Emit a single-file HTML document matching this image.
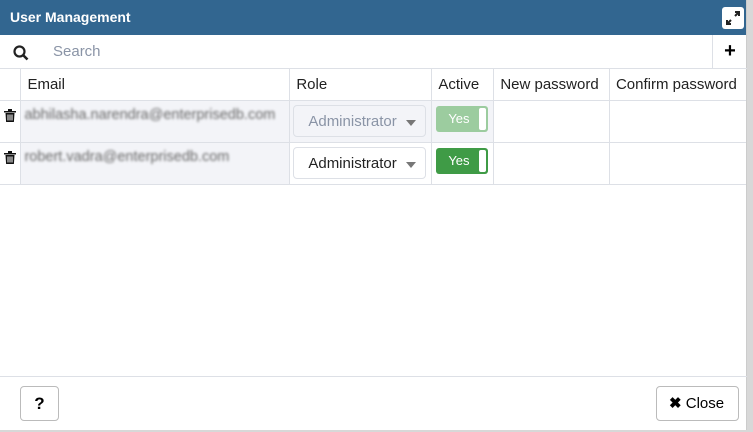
<!DOCTYPE html>
<html><head><style>
*{box-sizing:border-box;margin:0;padding:0}
body{width:753px;height:432px;background:#d8d8d8;font-family:"Liberation Sans",sans-serif;position:relative;overflow:hidden}
.dlg{position:absolute;left:0;top:0;width:747px;height:430px;background:#fff;border-right:1px solid #ccc}
.title{height:35px;background:#326690;color:#fff;font-weight:bold;font-size:14px;line-height:35px;padding-left:10px}
.exp{position:absolute;left:722px;top:7px;width:22px;height:22px;background:#fff;border-radius:3px}
.search{position:absolute;top:35px;left:0;width:747px;height:34px;border-bottom:1px solid #dde0e6}
.search .ph{position:absolute;left:53px;top:8px;color:#8a94a6;font-size:15px}
.plusbox{position:absolute;left:712px;top:0;width:35px;height:34px;border-left:1px solid #dde0e6;font-size:20px;font-weight:bold;text-align:center;line-height:33px}
table{position:absolute;top:68px;left:0;border-collapse:collapse;font-size:15px}
td,th{border:1px solid #dde0e6;text-align:left;font-weight:normal;color:#222}
th{height:32px;padding-left:6px}
tr.r td{height:42px;vertical-align:top}
.gray td.bg{background:#f3f4f8}
.em{filter:blur(1.2px);color:#666;font-size:14.5px;padding:6px 0 0 3px;white-space:nowrap}
.sel{margin:4px 3px;width:133px;height:32px;border:1px solid #dde0e6;border-radius:4px;padding:7px 0 0 14px;position:relative;font-size:15px}
.sel:after{content:"";position:absolute;right:9px;top:14px;border:5px solid transparent;border-top:6px solid #777}
.tg{margin:5px 4px;width:52px;height:26px;border-radius:3px;background:#3f9b46;color:#fff;font-size:13px;position:relative;padding:5px 0 0 12px}
.tg:after{content:"";position:absolute;right:2px;top:2px;width:7px;height:22px;background:#fff;border-radius:2px}
.btn{position:absolute;top:386px;height:35px;border:1px solid #bbb;border-radius:4px;background:#fff;font-size:15px}
</style></head><body>
<div class="dlg">
<div class="title">User Management</div>
<div class="exp"><svg width="22" height="22"><path d="M13 5h4v4M17 5l-4 4M9 17H5v-4M5 17l4-4" stroke="#222" stroke-width="2" fill="none"/></svg></div>
<div class="search">
<svg style="position:absolute;left:13px;top:10px" width="16" height="16"><circle cx="6.5" cy="6.5" r="5" stroke="#222" stroke-width="2.2" fill="none"/><path d="M10 10l4.5 4.5" stroke="#222" stroke-width="2.6"/></svg>
<span class="ph">Search</span>
<div class="plusbox">+</div>
</div>
<table>
<tr><th style="width:21px;border-left:0"></th><th style="width:269px">Email</th><th style="width:142px">Role</th><th style="width:62px">Active</th><th style="width:116px">New password</th><th style="width:137px;border-right:0">Confirm password</th></tr>
<tr class="r gray"><td style="border-left:0;padding:8px 0 0 4px"><svg width="12" height="13"><path d="M0 2h12v1.5H0zM4 0h4v2H4zM1.5 4h9l-.6 9H2.1zM3.5 5v7M6 5v7M8.5 5v7" fill="#111" stroke="#111" stroke-width="0"/><path d="M4 5.5v6M6 5.5v6M8 5.5v6" stroke="#fff" stroke-width="1"/></svg></td><td class="bg"><div class="em">abhilasha.narendra@enterprisedb.com</div></td><td class="bg"><div class="sel" style="color:#8a94a6;background:#f3f4f8">Administrator</div></td><td class="bg"><div class="tg" style="background:#9ccc9f">Yes</div></td><td></td><td style="border-right:0"></td></tr>
<tr class="r gray"><td style="border-left:0;padding:8px 0 0 4px"><svg width="12" height="13"><path d="M0 2h12v1.5H0zM4 0h4v2H4zM1.5 4h9l-.6 9H2.1z" fill="#111"/><path d="M4 5.5v6M6 5.5v6M8 5.5v6" stroke="#fff" stroke-width="1"/></svg></td><td class="bg"><div class="em">robert.vadra@enterprisedb.com</div></td><td><div class="sel" style="background:#fff">Administrator</div></td><td><div class="tg">Yes</div></td><td></td><td style="border-right:0"></td></tr>
</table>
<div style="position:absolute;top:376px;left:0;width:747px;border-top:1px solid #dde0e6"></div>
<div class="btn" style="left:20px;width:39px;text-align:center;line-height:33px;font-weight:bold;font-size:17px">?</div>
<div class="btn" style="left:656px;width:83px;line-height:33px;padding-left:12px"><b>&#x2716;</b> Close</div>
</div>
</body></html>
